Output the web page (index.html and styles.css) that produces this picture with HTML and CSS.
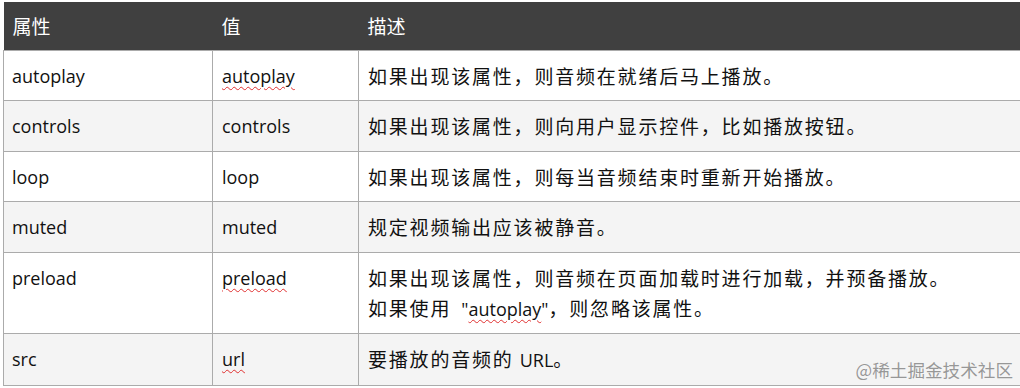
FILE: index.html
```html
<!DOCTYPE html>
<html lang="zh">
<head>
<meta charset="utf-8">
<title>audio 属性</title>
<link rel="stylesheet" href="styles.css">
</head>
<body>
<div class="wrap">
  <table class="attr-table">
    <colgroup>
      <col class="c1">
      <col class="c2">
      <col class="c3">
    </colgroup>
    <thead>
      <tr><th>属性</th><th>值</th><th>描述</th></tr>
    </thead>
    <tbody>
      <tr><td>autoplay</td><td><span class="spell">autoplay</span></td><td class="desc">如果出现该属性，则音频在就绪后马上播放。</td></tr>
      <tr><td>controls</td><td>controls</td><td class="desc">如果出现该属性，则向用户显示控件，比如播放按钮。</td></tr>
      <tr><td>loop</td><td>loop</td><td class="desc">如果出现该属性，则每当音频结束时重新开始播放。</td></tr>
      <tr><td>muted</td><td>muted</td><td class="desc">规定视频输出应该被静音。</td></tr>
      <tr><td>preload</td><td><span class="spell">preload</span></td><td class="desc">如果出现该属性，则音频在页面加载时进行加载，并预备播放。<br>如果使用 <span class="latin">"<span class="spell">autoplay</span>"</span>，则忽略该属性。</td></tr>
      <tr><td>src</td><td><span class="spell">url</span></td><td class="desc">要播放的音频的 <span class="mono">URL</span>。</td></tr>
    </tbody>
  </table>
  <div class="watermark">@稀土掘金技术社区</div>
</div>
</body>
</html>
```
FILE: styles.css
```css
html, body {
  margin: 0;
  padding: 0;
  background: #ffffff;
  overflow: hidden;
}

body {
  width: 1020px;
  height: 388px;
  font-family: "Open Sans", "Noto Sans CJK SC", sans-serif;
  color: #111111;
}

.wrap {
  position: relative;
  height: 388px;
  padding: 2px 0 0 3px;
  box-sizing: border-box;
}

.attr-table {
  border-collapse: collapse;
  table-layout: fixed;
  width: 1030px;
  font-size: 18px;
}

.c1 { width: 209px; }
.c2 { width: 146px; }
.c3 { width: 675px; }

.attr-table th {
  background: #404040;
  color: #ffffff;
  font-weight: normal;
  text-align: left;
  height: 48px;
  padding: 0 9px;
  font-size: 19px;
  line-height: 24px;
  font-family: "Noto Sans CJK SC", sans-serif;
  border: none;
  box-sizing: border-box;
}

.attr-table td {
  border: 1px solid #ababab;
  padding: 10px 9px 9.5px 9px;
  line-height: 30px;
  vertical-align: top;
}

.attr-table td:first-child { padding-left: 8px; }

.attr-table tbody tr:nth-child(even) td {
  background: #f4f4f4;
}

.desc {
  font-family: "Noto Sans CJK SC", sans-serif;
  font-size: 19px;
  letter-spacing: 1.8px;
  color: #111111;
}

.latin {
  font-family: "Open Sans", sans-serif;
  font-size: 18px;
  letter-spacing: 0;
  margin-left: 4px;
}

.mono {
  font-family: "Open Sans", sans-serif;
  font-size: 18px;
  letter-spacing: 0;
}

.spell {
  text-decoration: underline wavy #e03030;
  text-decoration-thickness: 1px;
  text-underline-offset: 3px;
}

.watermark {
  position: absolute;
  right: 7px;
  bottom: 7px;
  font-family: "Noto Sans CJK SC", sans-serif;
  font-size: 17.6px;
  line-height: 22px;
  color: rgba(120, 120, 120, 0.75);
  letter-spacing: 0;
}
```
